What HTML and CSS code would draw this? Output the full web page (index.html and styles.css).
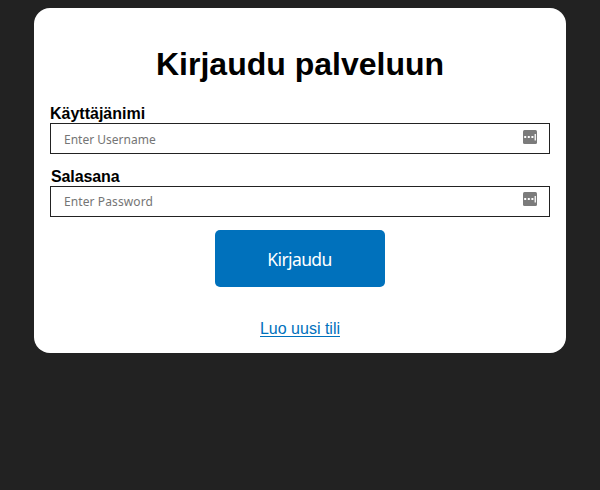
FILE: index.html
```
<!DOCTYPE html>
<html lang="fi">
<head>
<meta charset="utf-8">
<title>Kirjaudu palveluun</title>
<link rel="stylesheet" href="styles.css">
</head>
<body>
<form class="card">
  <h1 class="title">Kirjaudu palveluun</h1>
  <label class="label" for="user">Käyttäjänimi</label>
  <div class="field">
    <input class="input" id="user" type="text" placeholder="Enter Username">
    <svg class="icon" viewBox="0 0 14 14"><rect width="14" height="14" rx="1.5" fill="#7b7b7b"/><path d="M1.2 6h2v2h-2zM4.8 6h2v2h-2zM8.4 6h2v2h-2zM11.6 4h1.3v6.5h-1.3z" fill="#fff"/></svg>
  </div>
  <label class="label label-password" for="pass">Salasana</label>
  <div class="field">
    <input class="input input-password" id="pass" type="password" placeholder="Enter Password">
    <svg class="icon icon-password" viewBox="0 0 14 14"><rect width="14" height="14" rx="1.5" fill="#7b7b7b"/><path d="M1.2 6h2v2h-2zM4.8 6h2v2h-2zM8.4 6h2v2h-2zM11.6 4h1.3v6.5h-1.3z" fill="#fff"/></svg>
  </div>
  <button class="submit" type="button">Kirjaudu</button>
  <a class="link" href="#">Luo uusi tili</a>
</form>
</body>
</html>
```
FILE: styles.css
```
* {
  box-sizing: border-box;
}

body {
  margin: 0;
  padding-top: 8px;
  background: #222;
  font: 16px/18px "Liberation Sans", Arial, sans-serif;
}

.card {
  display: flex;
  flex-direction: column;
  width: 532px;
  height: 345px;
  margin: 0 auto;
  padding: 38px 16px 0;
  border-radius: 16px;
  background: #fff;
}

.title {
  margin: 0 0 22px;
  font-size: 32px;
  line-height: 37px;
  text-align: center;
}

.label {
  font-weight: bold;
}

.label-password {
  margin-top: 14px;
  padding-left: 1px;
  letter-spacing: -0.1px;
}

.field {
  position: relative;
  height: 31px;
}

.input {
  display: block;
  width: 100%;
  height: 31px;
  padding: 2px 13px 0;
  border: 1px solid #222;
  border-radius: 0;
  background: #fff;
  font: 12px "Noto Sans", sans-serif;
}

.input-password {
  padding-top: 0;
  letter-spacing: 0.1px;
}

.input::placeholder {
  color: #757575;
}

.icon {
  position: absolute;
  top: 7px;
  right: 13px;
  width: 14px;
  height: 14px;
}

.icon-password {
  top: 6px;
}

.submit {
  align-self: center;
  width: 170px;
  height: 57px;
  margin: 13px 0 33px;
  padding: 1px 1px 0 0;
  border: 0;
  border-radius: 5px;
  background: #0071bc;
  color: #fff;
  font: 17.5px "Noto Sans", sans-serif;
  letter-spacing: -0.6px;
}

.link {
  align-self: center;
  height: 17px;
  color: #0071bc;
  line-height: 18px;
  text-decoration: none;
  border-bottom: 1px solid #0071bc;
}
```
